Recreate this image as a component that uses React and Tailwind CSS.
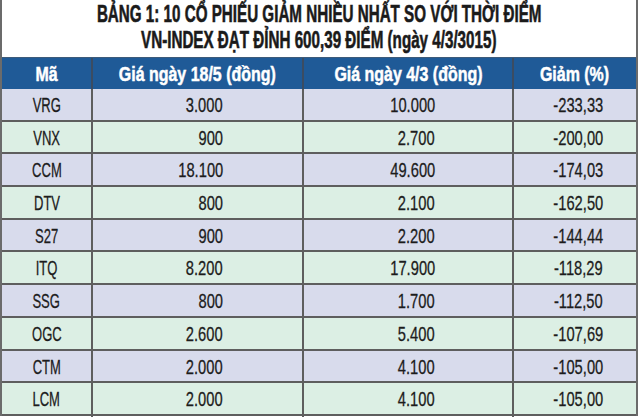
const rows = [
  ['VRG', '3.000', '10.000', '-233,33'],
  ['VNX', '900', '2.700', '-200,00'],
  ['CCM', '18.100', '49.600', '-174,03'],
  ['DTV', '800', '2.100', '-162,50'],
  ['S27', '900', '2.200', '-144,44'],
  ['ITQ', '8.200', '17.900', '-118,29'],
  ['SSG', '800', '1.700', '-112,50'],
  ['OGC', '2.600', '5.400', '-107,69'],
  ['CTM', '2.000', '4.100', '-105,00'],
  ['LCM', '2.000', '4.100', '-105,00'],
]

const font = { fontFamily: '"Liberation Sans", Arial, sans-serif' }

function Head({ children, first }) {
  return (
    <div className={'flex items-center justify-center overflow-visible ' + (first ? '' : 'border-l-2 border-[#3b4c62]')}>
      <span className="inline-block whitespace-nowrap scale-x-[0.76] [-webkit-text-stroke:0.5px_white]">{children}</span>
    </div>
  )
}

function Num({ children, pr }) {
  return (
    <div className={'flex items-center justify-end pb-[2px] border-l-2 border-[#5e5e5e] ' + pr}>
      <span className="inline-block whitespace-nowrap scale-x-[0.7] origin-right [-webkit-text-stroke:0.3px_#1c1c1c]">{children}</span>
    </div>
  )
}

export default function App() {
  return (
    <div className="w-[640px] h-[419px] bg-white overflow-hidden" style={font}>
      <div className="w-[638px] border-x-2 border-[#6b6b6b]">
        <div className="h-[57px] flex flex-col items-center pt-[1px] text-[#1a1a1a] font-bold text-[24px] leading-[26px] [-webkit-text-stroke:0.6px_#1a1a1a]">
          <span className="inline-block whitespace-nowrap scale-x-[0.633]">BẢNG 1: 10 CỔ PHIẾU GIẢM NHIỀU NHẤT SO VỚI THỜI ĐIỂM</span>
          <span className="inline-block whitespace-nowrap scale-x-[0.633]">VN-INDEX ĐẠT ĐỈNH 600,39 ĐIỂM (ngày 4/3/3015)</span>
        </div>
        <div className="grid grid-cols-[89px_211px_210px_124px] h-[32px] bg-[#1f5a97] text-white font-bold text-[21px] border-t border-[#3d5b7a]">
          <Head first>Mã</Head>
          <Head>Giá ngày 18/5 (đồng)</Head>
          <Head>Giá ngày 4/3 (đồng)</Head>
          <Head>Giảm (%)</Head>
        </div>
        {rows.map((r, i) => (
          <div
            key={r[0]}
            className={
              'grid grid-cols-[89px_211px_210px_124px] h-[32.7px] border-b-2 border-[#5e5e5e] text-[21px] text-[#1c1c1c] ' +
              (i % 2 === 0 ? 'bg-[#d8dbec]' : 'bg-[#dcefe4]')
            }
          >
            <div className="flex items-center justify-center pb-[2px]">
              <span className="inline-block whitespace-nowrap scale-x-[0.62] [-webkit-text-stroke:0.3px_#1c1c1c]">{r[0]}</span>
            </div>
            <Num pr="pr-[79px]">{r[1]}</Num>
            <Num pr="pr-[77px]">{r[2]}</Num>
            <Num pr="pr-[33px]">{r[3]}</Num>
          </div>
        ))}
      </div>
    </div>
  )
}
